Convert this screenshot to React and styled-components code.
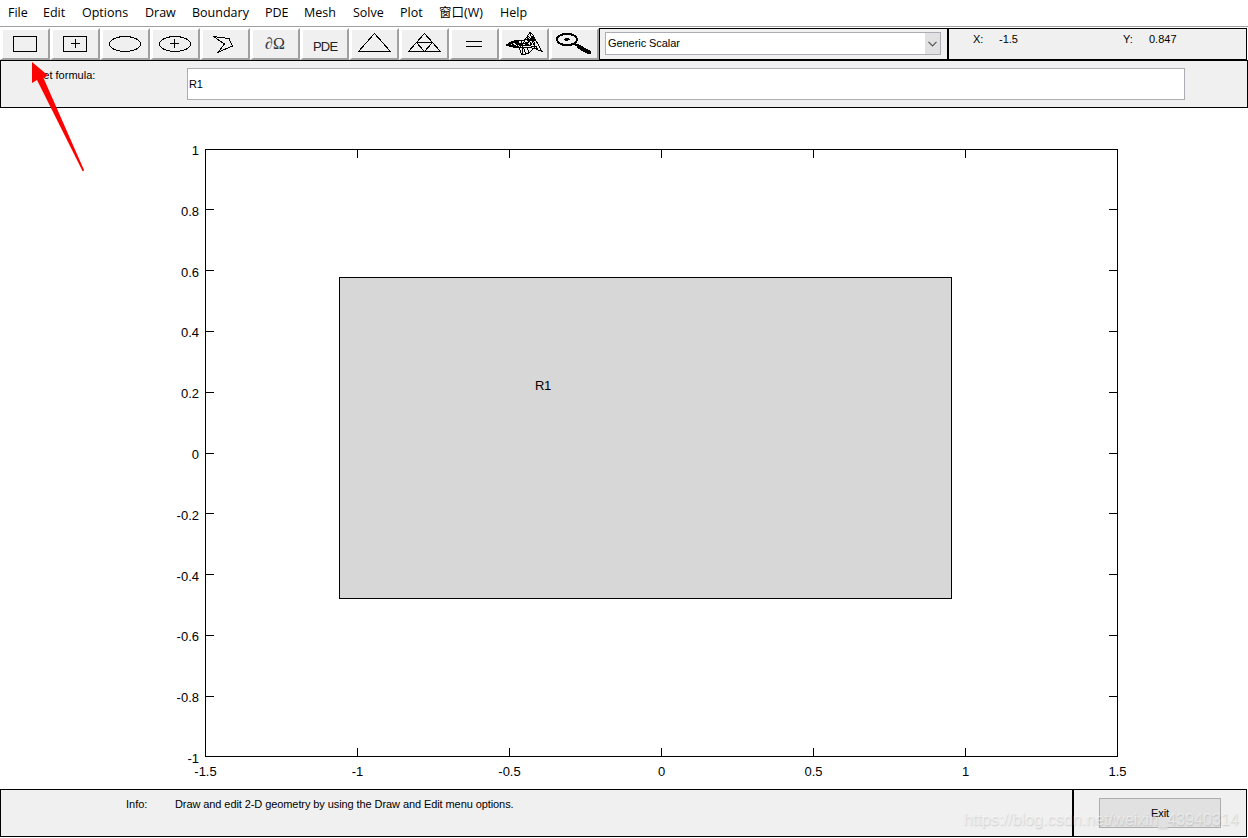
import React from "react";
import styled, { createGlobalStyle } from "styled-components";

const Global = createGlobalStyle`
  * { box-sizing: border-box; }
  body { margin: 0; background: #fff; color: #000; overflow: hidden; }
`;

const Window = styled.div`
  position: relative;
  width: 1248px;
  height: 838px;
  display: flex;
  flex-direction: column;
  font: 11px/13px "Liberation Sans", Arial, sans-serif;
  background: #fff;
`;

const MenuBar = styled.nav`
  height: 27px;
  flex: none;
  display: flex;
  padding-left: 8px;
  border-bottom: 1px solid #a0a0a0;
  font: 12.5px/26px "Open Sans", "Noto Sans CJK SC", sans-serif;
`;

const MenuItem = styled.span`
  width: ${(p) => p.$width}px;
  white-space: nowrap;
`;

const ToolRow = styled.div`
  height: 33px;
  flex: none;
  display: flex;
  padding-top: 1px;
`;

const ToolGroup = styled.div`
  display: flex;
  width: 599px;
  height: 32px;
`;

const ToolButton = styled.button`
  width: ${(p) => p.$width || 50}px;
  height: 32px;
  flex: none;
  padding: 0;
  border-style: solid;
  border-width: 2px 2px 2px 3px;
  border-color: #fff #a0a0a0 #a0a0a0 #fff;
  background: #f0f0f0;
  display: flex;
  align-items: center;
  justify-content: flex-start;
  overflow: hidden;
  color: #222;
`;

const Glyph = styled.svg`
  display: block;
  flex: none;
  fill: none;
  stroke: #000;
  stroke-width: 1;
  shape-rendering: crispEdges;
`;

const BoundaryText = styled.span`
  font: italic 16px/20px "Liberation Serif", serif;
  color: #333;
  padding-left: 12px;
  em { font-style: normal; }
`;

const PdeText = styled.span`
  font-size: 13px;
  padding: 5px 0 0 10px;
  letter-spacing: -0.8px;
`;

const SelectPanel = styled.div`
  width: 350px;
  height: 33px;
  border: 1px solid #000;
  border-width: 1px 2px 2px 1px;
  background: #f0f0f0;
  padding: 3px 0 0 5px;
`;

const Select = styled.div`
  width: 336px;
  height: 23px;
  border: 1px solid #abadb3;
  background: #fff;
  display: flex;
  justify-content: space-between;
  line-height: 20px;
  padding-left: 2px;
  letter-spacing: -0.06px;
`;

const SelectArrow = styled.span`
  width: 15px;
  background: #e1e1e1;
  display: flex;
  align-items: center;
  justify-content: center;
`;

const CoordPanel = styled.div`
  width: 298px;
  height: 33px;
  border: solid #000;
  border-width: 1px 1px 2px 0;
  background: #f0f0f0;
  display: flex;
  padding: 4px 0 0 24px;
`;

const Cell = styled.span`
  width: ${(p) => p.$width}px;
  white-space: nowrap;
  letter-spacing: ${(p) => p.$spacing || 0}px;
`;

const FormulaPanel = styled.div`
  height: 48px;
  flex: none;
  display: flex;
  border: 1px solid #000;
  background: #f0f0f0;
  padding: 7px 0 0 35px;
`;

const FormulaLabel = styled.label`
  width: 151px;
  padding-top: 1px;
`;

const FormulaInput = styled.div`
  width: 998px;
  height: 32px;
  border: 1px solid #abadb3;
  background: #fff;
  line-height: 31px;
  padding-left: 1px;
  letter-spacing: -0.3px;
`;

const Plot = styled.svg`
  display: block;
  flex: none;
  width: 1248px;
  height: 681px;
  font: 13px "Liberation Sans", Arial, sans-serif;
  .lines { fill: none; stroke: #000; shape-rendering: crispEdges; }
`;

const StatusRow = styled.div`
  display: flex;
  height: 48px;
  width: 1247px;
  flex: none;
`;

const InfoPanel = styled.div`
  width: 1073px;
  border: 1px solid #000;
  background: #f0f0f0;
  display: flex;
  padding: 8px 0 0 125px;
`;

const ExitPanel = styled.div`
  width: 174px;
  border: 1px solid #000;
  background: #f0f0f0;
  padding: 8px 0 0 25px;
`;

const ExitButton = styled.button`
  display: block;
  width: 122px;
  height: 30px;
  padding: 0;
  border: 1px solid #adadad;
  background: #e1e1e1;
  color: #000;
  font: 11px/28px "Liberation Sans", Arial, sans-serif;
  letter-spacing: -0.1px;
`;

const Arrow = styled.svg`
  position: absolute;
  left: 30px;
  top: 60px;
`;

const Watermark = styled.span`
  position: absolute;
  right: 9px;
  bottom: 9px;
  font-size: 16px;
  line-height: 19px;
  letter-spacing: 0.08px;
  white-space: nowrap;
  color: rgba(255, 255, 255, 0.55);
  text-shadow: 0.5px 1px 1.5px rgba(0, 0, 0, 0.17);
  pointer-events: none;
`;

const menus = [
  ["File", 35], ["Edit", 39], ["Options", 63], ["Draw", 47], ["Boundary", 73],
  ["PDE", 39], ["Mesh", 49], ["Solve", 47], ["Plot", 39], ["窗口(W)", 61], ["Help", 40],
];

const Icon = ({ children }) => (
  <Glyph width="44" height="28" viewBox="0 0 44 28">{children}</Glyph>
);

const tools = [
  <Icon><path d="M10.5 6.5h23v15h-23z" /></Icon>,
  <Icon><path d="M10.5 6.5h23v15h-23zM18 13.5h9M22.500 9v9" /></Icon>,
  <Icon><ellipse cx="22" cy="14" rx="15.5" ry="7.5" /></Icon>,
  <Icon><ellipse cx="22" cy="14" rx="15.5" ry="7.5" /><path d="M17 13.5h9M21.500 9v9" /></Icon>,
  <Icon><path d="M10.5 6.5L26 8.5 29.5 16 15.5 22 21.5 14z" /></Icon>,
  <BoundaryText>∂<em>Ω</em></BoundaryText>,
  <PdeText>PDE</PdeText>,
  <Icon><path d="M6.5 21.5h32L22.5 3.5z" /></Icon>,
  <Icon><path d="M6.5 21.5h32L22.5 3.5zM14.500 12.5h16l-8 9z" /></Icon>,
  <Icon><path d="M14 11.5h16M14 16.5h16" /></Icon>,
  <Icon>
    <path d="M4 15L10 11.5 16 10 22 11 28 2.500 31 5 33 9 40 21.500 36 20 32 18 27 23 20 25 17 18 11 17z" />
    <path d="M6 15l8 0 6-2 6 0 5-7M10 16l7 0 6-1 5 1 5-7M9 12l4 5M12 11l5 7M15 10l4 6M19 11l2 6" />
    <path d="M23 9l5 2 5-2M25 6l5 3 2-2M22 11l6 5M25 7l5 8M28 3l3 10M31 6l2 12M22 12l-5 6M28 9l-5 7" />
    <path d="M17 18l5-1 5 1 5-2 3 1M21 17l3 7M25 17l2 6M29 16l2 4M31 13l5 7M20 17l0 7" />
    <path d="M6 14.500l6-2.500 5 1" strokeWidth="2" />
  </Icon>,
  <Icon>
    <ellipse cx="15" cy="9.5" rx="10" ry="5.7" strokeWidth="2" />
    <path d="M13 8.500h4M12 9.500h6M13 10.500h3" />
    <path d="M22 13.500l5 3" strokeWidth="2" />
    <path d="M26.500 16.500l10.500 6" strokeWidth="4" strokeLinecap="round" />
  </Icon>,
];

const xs = [205.5, 357.5, 509.5, 661.5, 813.5, 965.5, 1117.5];
const xLabels = ["-1.5", "-1", "-0.5", "0", "0.5", "1", "1.5"];
const yTicks = [
  [41.5, 47, "1"], [101.5, 108, "0.8"], [162.5, 169, "0.6"], [223.5, 229, "0.4"],
  [284.5, 290, "0.2"], [345.5, 351, "0"], [405.5, 412, "-0.2"], [466.5, 473, "-0.4"],
  [527.5, 533, "-0.6"], [588.5, 594, "-0.8"], [648.5, 655, "-1"],
];

export default function App() {
  return (
    <Window>
      <Global />
      <MenuBar>
        {menus.map(([label, width]) => <MenuItem key={label} $width={width}>{label}</MenuItem>)}
      </MenuBar>
      <ToolRow>
        <ToolGroup>
          {tools.map((tool, i) => <ToolButton key={i} $width={i === 6 ? 49 : 50}>{tool}</ToolButton>)}
        </ToolGroup>
        <SelectPanel>
          <Select>
            Generic Scalar
            <SelectArrow>
              <svg width="9" height="6" fill="none" stroke="#555" strokeWidth="1.2"><path d="M.5.8l4 4 4-4" /></svg>
            </SelectArrow>
          </Select>
        </SelectPanel>
        <CoordPanel>
          <Cell $width={26}>X:</Cell>
          <Cell $width={124}>-1.5</Cell>
          <Cell $width={26}>Y:</Cell>
          <Cell $width={60}>0.847</Cell>
        </CoordPanel>
      </ToolRow>
      <FormulaPanel>
        <FormulaLabel>Set formula:</FormulaLabel>
        <FormulaInput>R1</FormulaInput>
      </FormulaPanel>
      <Plot viewBox="0 0 1248 681">
        <rect x="339.5" y="169.5" width="612" height="321" fill="#d7d7d7" stroke="#000" shapeRendering="crispEdges" />
        <g className="lines">
          <path d="M205.5 41.5h912v607h-912z" />
          {xs.map((x) => <path key={x} d={`M${x} 41v9M${x} 649v-9`} />)}
          {yTicks.map(([y]) => <path key={y} d={`M205 ${y}h9M1118 ${y}h-9`} />)}
        </g>
        {xs.map((x, i) => <text key={x} x={x} y="668" textAnchor="middle">{xLabels[i]}</text>)}
        {yTicks.map(([y, base, label]) => <text key={y} x="199" y={base} textAnchor="end">{label}</text>)}
        <text x="535" y="282" letterSpacing="-0.4">R1</text>
      </Plot>
      <StatusRow>
        <InfoPanel>
          <Cell $width={49}>Info:</Cell>
          <Cell $spacing={-0.085}>Draw and edit 2-D geometry by using the Draw and Edit menu options.</Cell>
        </InfoPanel>
        <ExitPanel><ExitButton>Exit</ExitButton></ExitPanel>
      </StatusRow>
      <Arrow width="56" height="114" viewBox="0 0 56 114">
        <path d="M2 2L18 15.5L13.5 18L54 110Q54 111.5 52.5 111L7 20L2 23Z" fill="#f00" />
      </Arrow>
      <Watermark>https://blog.csdn.net/weixin_43940314</Watermark>
    </Window>
  );
}
